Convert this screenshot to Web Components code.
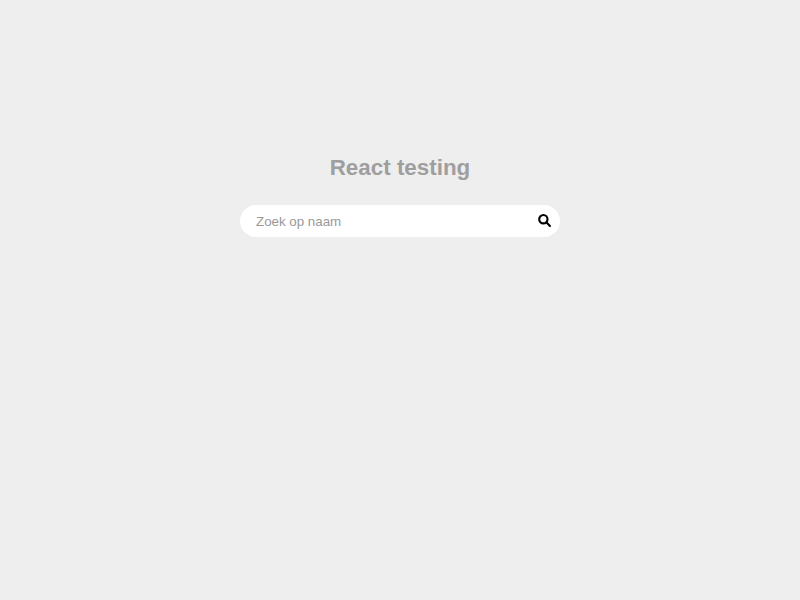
<!DOCTYPE html>
<html lang="nl">
<head>
<meta charset="utf-8">
<title>React testing</title>
<style>
body { margin: 0; background: #eee; font-family: "Liberation Sans", Arial, sans-serif; }
</style>
</head>
<body>
<search-page><page-title>React testing</page-title><search-bar placeholder="Zoek op naam"></search-bar></search-page>
<script>
class SearchPage extends HTMLElement {
  constructor() {
    super();
    this.attachShadow({ mode: "open" }).innerHTML = `
      <style>
        :host { display: flex; flex-direction: column; align-items: center; gap: 24px; box-sizing: border-box; min-height: 100vh; padding-top: 154px; }
      </style>
      <slot></slot>`;
  }
}
class PageTitle extends HTMLElement {
  constructor() {
    super();
    this.attachShadow({ mode: "open" }).innerHTML = `
      <style>
        :host { display: block; }
        h1 { margin: 0; color: #9e9e9e; font-size: 22.4px; line-height: 27px; font-weight: 700; white-space: nowrap; }
      </style>
      <h1><slot></slot></h1>`;
  }
}
class SearchBar extends HTMLElement {
  constructor() {
    super();
    this.attachShadow({ mode: "open" }).innerHTML = `
      <style>
        :host { display: flex; align-items: center; box-sizing: border-box; width: 320px; height: 32px; padding: 0 9px 0 16px; background: #fff; border-radius: 16px; }
        input { flex: 1; min-width: 0; height: 32px; padding: 0; border: 0; outline: 0; background: transparent; color: #333; font: 13.3333px/15px "Liberation Sans", Arial, sans-serif; }
        input::placeholder { color: #999; opacity: 1; }
        svg { display: block; width: 13px; height: 13px; margin-top: -1px; }
      </style>
      <input type="text">
      <svg viewBox="0 0 13 13" fill="none" stroke="#000" stroke-width="2.1" stroke-linecap="round" aria-hidden="true"><circle cx="5.35" cy="5.2" r="4.15"/><path d="M8.4 8.3 11.9 11.9"/></svg>`;
  }
  connectedCallback() {
    this.shadowRoot.querySelector("input").placeholder = this.getAttribute("placeholder") || "";
  }
}
customElements.define("search-page", SearchPage);
customElements.define("page-title", PageTitle);
customElements.define("search-bar", SearchBar);
</script>
</body>
</html>
